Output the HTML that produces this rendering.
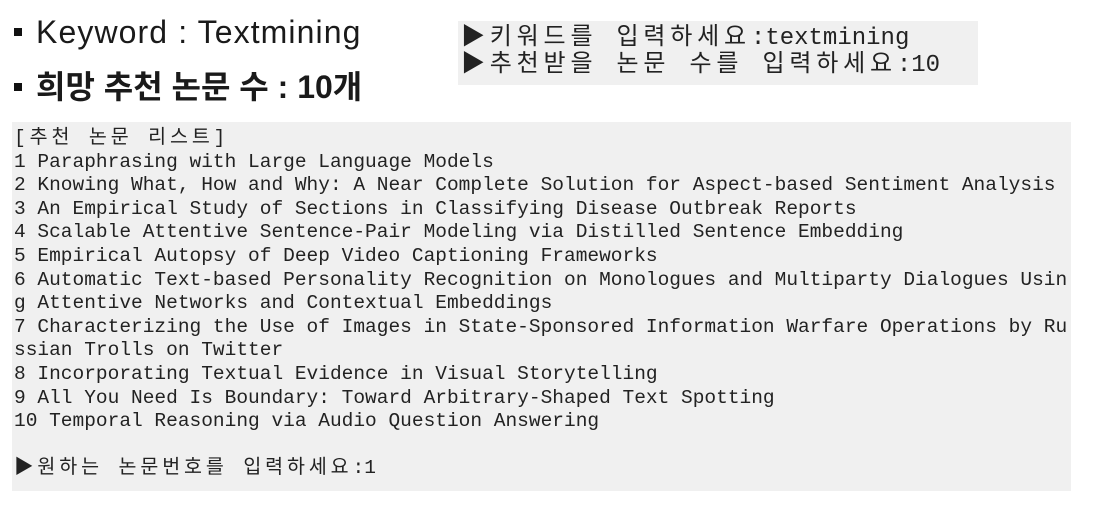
<!DOCTYPE html>
<html><head><meta charset="utf-8"><style>
body{margin:0;width:1093px;height:511px;background:#fff;position:relative;overflow:hidden;color:#1a1a1a}
.b{position:absolute;left:14px;font-family:"Liberation Sans","Noto Sans CJK KR",sans-serif;font-size:32px;white-space:nowrap;letter-spacing:1.1px}
.b:before{content:"";display:inline-block;width:8px;height:8px;background:#111;margin-right:14px;vertical-align:middle;position:relative;top:-3px}
.box{position:absolute;background:#f0f0f0;font-family:"Liberation Mono","Noto Sans CJK KR",monospace;white-space:pre;color:#222}
#t{left:458px;top:21px;width:520px;height:64px;font-size:24px;line-height:27px;padding-left:3px;box-sizing:border-box;padding-top:4px}
#t .k{letter-spacing:4.8px}
#m{left:12px;top:122px;width:1059px;height:369px;font-size:19.5px;line-height:23.6px;padding-left:2px;padding-top:5px;box-sizing:border-box}
#m .k{letter-spacing:3.9px}
</style></head><body>
<div class="b" style="top:14px">Keyword : Textmining</div>
<div class="b" style="top:62px;font-weight:bold;letter-spacing:0">희망 추천 논문 수 : 10개</div>
<div class="box" id="t"><span class="k">▶키워드를 입력하세요</span>:textmining
<span class="k">▶추천받을 논문 수를 입력하세요</span>:10</div>
<div class="box" id="m"><span class="k">[추천 논문 리스트]</span>
1 Paraphrasing with Large Language Models
2 Knowing What, How and Why: A Near Complete Solution for Aspect-based Sentiment Analysis
3 An Empirical Study of Sections in Classifying Disease Outbreak Reports
4 Scalable Attentive Sentence-Pair Modeling via Distilled Sentence Embedding
5 Empirical Autopsy of Deep Video Captioning Frameworks
6 Automatic Text-based Personality Recognition on Monologues and Multiparty Dialogues Usin
g Attentive Networks and Contextual Embeddings
7 Characterizing the Use of Images in State-Sponsored Information Warfare Operations by Ru
ssian Trolls on Twitter
8 Incorporating Textual Evidence in Visual Storytelling
9 All You Need Is Boundary: Toward Arbitrary-Shaped Text Spotting
10 Temporal Reasoning via Audio Question Answering

<span class="k">▶원하는 논문번호를 입력하세요</span>:1</div>
</body></html>
